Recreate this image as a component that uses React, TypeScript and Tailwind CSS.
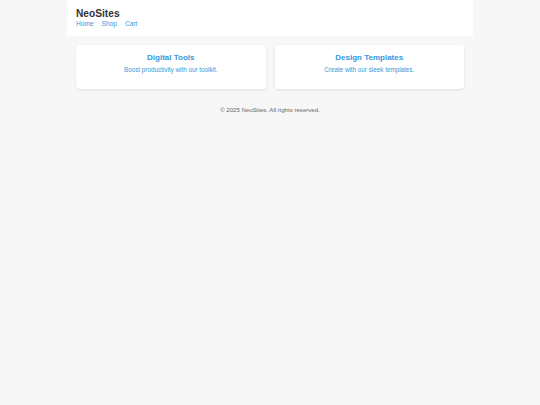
export default function App() {
  return (
    <div
      className="min-h-[405px] bg-[#f7f7f7] text-[#333]"
      style={{ fontFamily: '"Liberation Sans", Arial, sans-serif' }}
    >
      <div className="mx-auto w-[406px]">
        <header className="h-[36px] bg-white px-[9px] pt-[8px]">
          <h1 className="text-[10.2px] font-bold leading-[12px] text-[#333]">NeoSites</h1>
          <nav className="mt-[0px] flex gap-[8px] text-[6.6px] leading-[8px] text-[#3498db]">
            <a>Home</a>
            <a>Shop</a>
            <a>Cart</a>
          </nav>
        </header>
        <main className="grid grid-cols-2 gap-[9px] px-[9px] pt-[9px]">
          {[
            ["Digital Tools", "Boost productivity with our toolkit."],
            ["Design Templates", "Create with our sleek templates."],
          ].map(([t, s]) => (
            <div
              key={t}
              className="h-[44px] rounded-[4px] bg-white pt-[8px] text-center shadow-[0_1px_3px_rgba(0,0,0,0.1)]"
            >
              <h2 className="text-[8px] font-bold leading-[10px] text-[#3498db]">{t}</h2>
              <p className="mt-[3px] text-[6.3px] leading-[8px] text-[#3498db]">{s}</p>
            </div>
          ))}
        </main>
        <footer className="mt-[17px] text-center text-[6.1px] leading-[8px] text-[#666]">
          © 2025 NeoSites. All rights reserved.
        </footer>
      </div>
    </div>
  );
}
